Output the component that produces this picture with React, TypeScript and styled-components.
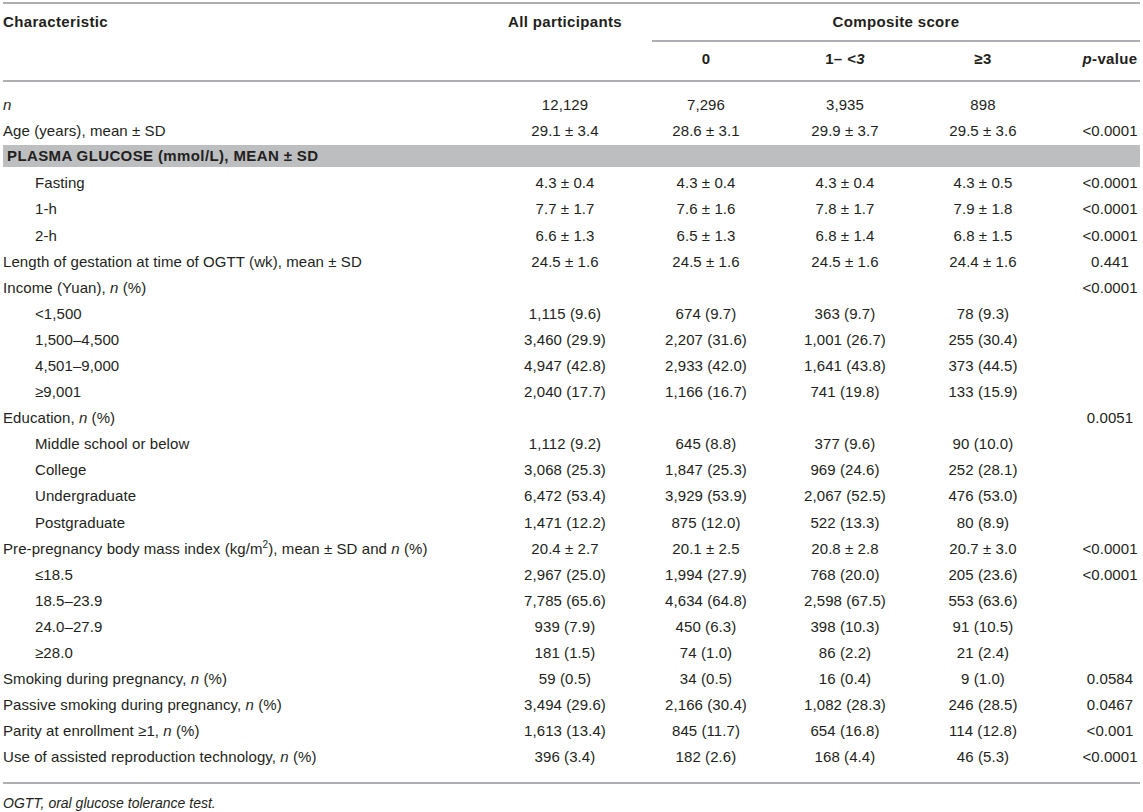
import React from "react";
import styled, { createGlobalStyle } from "styled-components";

const GlobalStyle = createGlobalStyle`
  html, body { margin: 0; padding: 0; background: #ffffff; }
  body {
    font-family: "Liberation Sans", Arial, Helvetica, sans-serif;
    color: #231f20;
  }
`;

const RULE = "#adafb2";

const Page = styled.div`
  width: 1143px;
  padding: 2px 3px 0;
  box-sizing: border-box;
`;

const Table = styled.table`
  width: 1137px;
  table-layout: fixed;
  border-collapse: separate;
  border-spacing: 0;
  border-top: 2px solid ${RULE};
  border-bottom: 2px solid ${RULE};
  font-size: 15px;
  line-height: 18px;
  letter-spacing: 0.08px;
`;

const HeadCell = styled.th<{ $align?: "left" | "center"; $rule?: boolean; $row: 1 | 2; $p?: boolean }>`
  font-weight: 700;
  letter-spacing: 0.35px;
  text-align: ${(p) => p.$align ?? "center"};
  vertical-align: top;
  padding: ${(p) => (p.$row === 1 ? "9px 0 9px" : "8px 0 12px")};
  padding-left: ${(p) => (p.$p ? "44px" : "0")};
  border-bottom: 2px solid ${(p) => (p.$rule ? RULE : "transparent")};
  white-space: nowrap;
`;

const Row = styled.tr`
  height: 26.1px;
`;

const Spacer = styled.tr<{ $h: number }>`
  height: ${(p) => p.$h}px;
  & > td { padding: 0; }
`;

const LabelCell = styled.td<{ $indent?: boolean }>`
  padding: 0 0 0 ${(p) => (p.$indent ? "32px" : "0")};
  white-space: nowrap;
  vertical-align: middle;
`;

const ValueCell = styled.td<{ $p?: boolean }>`
  text-align: center;
  padding: 0 0 0 ${(p) => (p.$p ? "44px" : "0")};
  white-space: nowrap;
  vertical-align: middle;
`;

const SectionCell = styled.td`
  padding: 1px 0 3px;
`;

const SectionBar = styled.div`
  height: 22px;
  line-height: 22px;
  background: #bcbec0;
  padding-left: 4px;
  font-weight: 700;
  letter-spacing: 0.38px;
`;

const Sup = styled.sup`
  font-size: 10px;
  line-height: 0;
  vertical-align: 6px;
`;

const Note = styled.p`
  margin: 10px 0 0;
  font-style: italic;
  font-size: 14px;
  line-height: 18px;
`;

type DataRow = {
  kind: "row";
  label: React.ReactNode;
  indent?: boolean;
  values: [string, string, string, string, string];
};
type SectionRow = { kind: "section"; label: React.ReactNode };

const n = <i>n</i>;

const rows: (DataRow | SectionRow)[] = [
  { kind: "row", label: n, values: ["12,129", "7,296", "3,935", "898", ""] },
  { kind: "row", label: "Age (years), mean ± SD", values: ["29.1 ± 3.4", "28.6 ± 3.1", "29.9 ± 3.7", "29.5 ± 3.6", "<0.0001"] },
  { kind: "section", label: "PLASMA GLUCOSE (mmol/L), MEAN ± SD" },
  { kind: "row", indent: true, label: "Fasting", values: ["4.3 ± 0.4", "4.3 ± 0.4", "4.3 ± 0.4", "4.3 ± 0.5", "<0.0001"] },
  { kind: "row", indent: true, label: "1-h", values: ["7.7 ± 1.7", "7.6 ± 1.6", "7.8 ± 1.7", "7.9 ± 1.8", "<0.0001"] },
  { kind: "row", indent: true, label: "2-h", values: ["6.6 ± 1.3", "6.5 ± 1.3", "6.8 ± 1.4", "6.8 ± 1.5", "<0.0001"] },
  { kind: "row", label: "Length of gestation at time of OGTT (wk), mean ± SD", values: ["24.5 ± 1.6", "24.5 ± 1.6", "24.5 ± 1.6", "24.4 ± 1.6", "0.441"] },
  { kind: "row", label: <>Income (Yuan), {n} (%)</>, values: ["", "", "", "", "<0.0001"] },
  { kind: "row", indent: true, label: "<1,500", values: ["1,115 (9.6)", "674 (9.7)", "363 (9.7)", "78 (9.3)", ""] },
  { kind: "row", indent: true, label: "1,500–4,500", values: ["3,460 (29.9)", "2,207 (31.6)", "1,001 (26.7)", "255 (30.4)", ""] },
  { kind: "row", indent: true, label: "4,501–9,000", values: ["4,947 (42.8)", "2,933 (42.0)", "1,641 (43.8)", "373 (44.5)", ""] },
  { kind: "row", indent: true, label: "≥9,001", values: ["2,040 (17.7)", "1,166 (16.7)", "741 (19.8)", "133 (15.9)", ""] },
  { kind: "row", label: <>Education, {n} (%)</>, values: ["", "", "", "", "0.0051"] },
  { kind: "row", indent: true, label: "Middle school or below", values: ["1,112 (9.2)", "645 (8.8)", "377 (9.6)", "90 (10.0)", ""] },
  { kind: "row", indent: true, label: "College", values: ["3,068 (25.3)", "1,847 (25.3)", "969 (24.6)", "252 (28.1)", ""] },
  { kind: "row", indent: true, label: "Undergraduate", values: ["6,472 (53.4)", "3,929 (53.9)", "2,067 (52.5)", "476 (53.0)", ""] },
  { kind: "row", indent: true, label: "Postgraduate", values: ["1,471 (12.2)", "875 (12.0)", "522 (13.3)", "80 (8.9)", ""] },
  {
    kind: "row",
    label: <>Pre-pregnancy body mass index (kg/m<Sup>2</Sup>), mean ± SD and {n} (%)</>,
    values: ["20.4 ± 2.7", "20.1 ± 2.5", "20.8 ± 2.8", "20.7 ± 3.0", "<0.0001"],
  },
  { kind: "row", indent: true, label: "≤18.5", values: ["2,967 (25.0)", "1,994 (27.9)", "768 (20.0)", "205 (23.6)", "<0.0001"] },
  { kind: "row", indent: true, label: "18.5–23.9", values: ["7,785 (65.6)", "4,634 (64.8)", "2,598 (67.5)", "553 (63.6)", ""] },
  { kind: "row", indent: true, label: "24.0–27.9", values: ["939 (7.9)", "450 (6.3)", "398 (10.3)", "91 (10.5)", ""] },
  { kind: "row", indent: true, label: "≥28.0", values: ["181 (1.5)", "74 (1.0)", "86 (2.2)", "21 (2.4)", ""] },
  { kind: "row", label: <>Smoking during pregnancy, {n} (%)</>, values: ["59 (0.5)", "34 (0.5)", "16 (0.4)", "9 (1.0)", "0.0584"] },
  { kind: "row", label: <>Passive smoking during pregnancy, {n} (%)</>, values: ["3,494 (29.6)", "2,166 (30.4)", "1,082 (28.3)", "246 (28.5)", "0.0467"] },
  { kind: "row", label: <>Parity at enrollment ≥1, {n} (%)</>, values: ["1,613 (13.4)", "845 (11.7)", "654 (16.8)", "114 (12.8)", "<0.001"] },
  { kind: "row", label: <>Use of assisted reproduction technology, {n} (%)</>, values: ["396 (3.4)", "182 (2.6)", "168 (4.4)", "46 (5.3)", "<0.0001"] },
];

const colWidths = [475, 174, 108, 170, 106, 104];

export default function App() {
  return (
    <Page>
      <GlobalStyle />
      <Table>
        <colgroup>
          {colWidths.map((w, i) => (
            <col key={i} style={{ width: w }} />
          ))}
        </colgroup>
        <thead>
          <tr>
            <HeadCell $row={1} $align="left">Characteristic</HeadCell>
            <HeadCell $row={1}>All participants</HeadCell>
            <HeadCell $row={1} colSpan={4} $rule>Composite score</HeadCell>
          </tr>
          <tr>
            <HeadCell $row={2} $rule />
            <HeadCell $row={2} $rule />
            <HeadCell $row={2} $rule>0</HeadCell>
            <HeadCell $row={2} $rule>1– <i>&lt;3</i></HeadCell>
            <HeadCell $row={2} $rule>≥3</HeadCell>
            <HeadCell $row={2} $rule $p><i>p</i>-value</HeadCell>
          </tr>
        </thead>
        <tbody>
          <Spacer $h={10}><td colSpan={6} /></Spacer>
          {rows.map((r, i) =>
            r.kind === "section" ? (
              <Row key={i}>
                <SectionCell colSpan={6}>
                  <SectionBar>{r.label}</SectionBar>
                </SectionCell>
              </Row>
            ) : (
              <Row key={i}>
                <LabelCell $indent={r.indent}>{r.label}</LabelCell>
                {r.values.map((v, j) => (
                  <ValueCell key={j} $p={j === 4}>{v}</ValueCell>
                ))}
              </Row>
            )
          )}
          <Spacer $h={12}><td colSpan={6} /></Spacer>
        </tbody>
      </Table>
      <Note>OGTT, oral glucose tolerance test.</Note>
    </Page>
  );
}
